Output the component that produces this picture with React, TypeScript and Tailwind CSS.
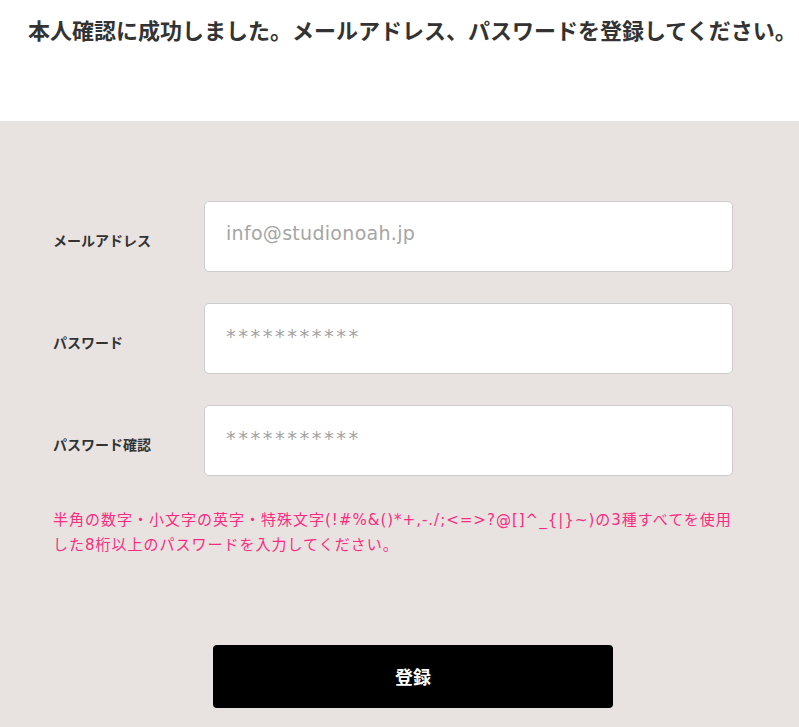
import React from "react";

const font = { fontFamily: '"Noto Sans CJK JP", "Noto Sans", sans-serif' };
const latin = { fontFamily: '"DejaVu Sans", "Noto Sans CJK JP", sans-serif' };

function Row({ label, placeholder, wide }: { label: string; placeholder: string; wide?: boolean }) {
  return (
    <div className="flex items-center">
      <div className="w-[204px] shrink-0 pl-[53px] pt-2 text-[14px] font-bold text-[#333] whitespace-nowrap">{label}</div>
      <div className="w-[529px] h-[71px] bg-white border border-[#cccccc] rounded-[5px] flex items-center pl-[21px] pb-[6px]">
        {wide ? (
          <span style={latin} className="text-[19.5px] text-[#a3a3a3] tracking-[2.5px] pt-[2px]">{placeholder}</span>
        ) : (
          <span style={latin} className="text-[19px] text-[#a5a5a5] tracking-[0.3px]">{placeholder}</span>
        )}
      </div>
    </div>
  );
}

export default function App() {
  return (
    <div style={font} className="w-[799px] min-h-[727px] bg-[#e8e3e1]">
      <header className="h-[121px] bg-white pl-[28px] pt-[14px]">
        <h1 className="text-[22px] font-bold text-[#333] whitespace-nowrap leading-[30px]">
          本人確認に成功しました。メールアドレス、パスワードを登録してください。
        </h1>
      </header>
      <main className="pt-[80px] pb-[20px]">
        <div className="flex flex-col gap-[31px]">
          <Row label="メールアドレス" placeholder="info@studionoah.jp" />
          <Row label="パスワード" placeholder="***********" wide />
          <Row label="パスワード確認" placeholder="***********" wide />
        </div>
        <p className="pl-[53px] pr-[40px] mt-[31px] text-[15px] leading-[24px] tracking-[1px] text-[#ff2a7f] whitespace-nowrap">
          半角の数字・小文字の英字・特殊文字<span style={latin}>(!#%&amp;()*+,-./;&lt;=&gt;?@[]^_{"{"}|{"}"}~)</span>の<span style={latin}>3</span>種すべてを使用
          <br />
          した<span style={latin}>8</span>桁以上のパスワードを入力してください。
        </p>
        <div className="flex justify-center mt-[88px]">
          <button className="w-[400px] h-[63px] bg-black rounded-[4px] text-white text-[18px] font-bold ml-[27px]">
            登録
          </button>
        </div>
      </main>
    </div>
  );
}
